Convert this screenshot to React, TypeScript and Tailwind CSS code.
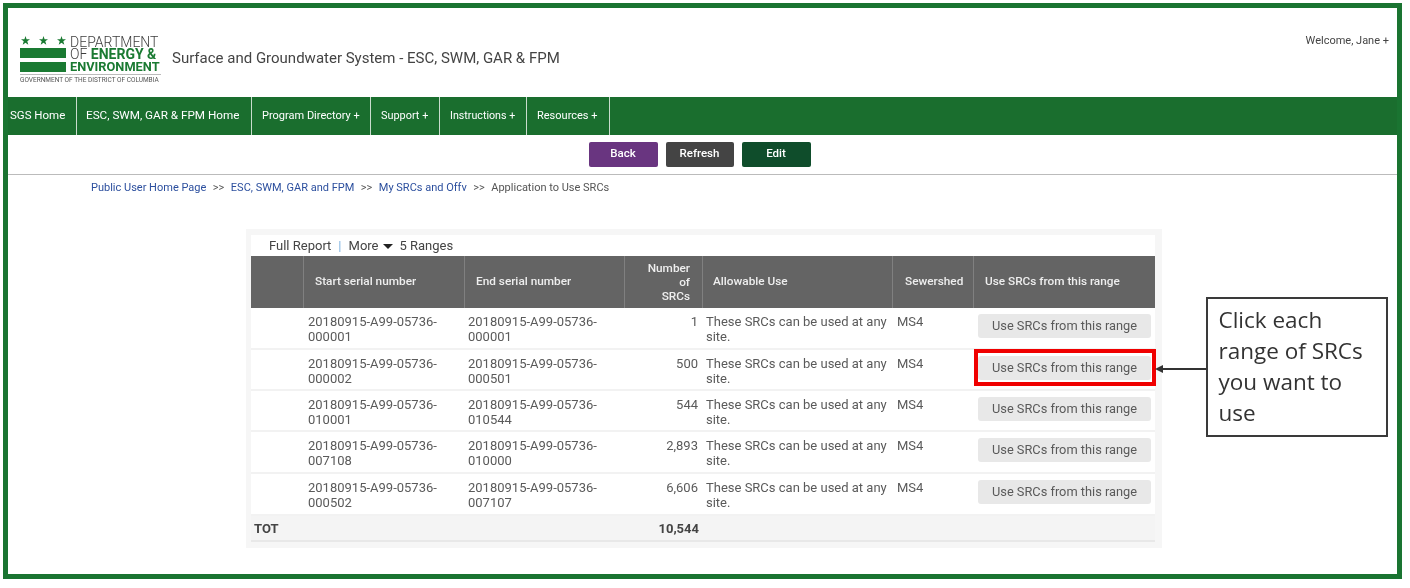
import React from "react";

const nav = [
  { t: "SGS Home", w: "w-[69px]", pl: "pl-[2px]", s: "text-[11.5px]" },
  { t: "ESC, SWM, GAR & FPM Home", w: "w-[175px]", pl: "pl-[9px]", s: "text-[11.7px]" },
  { t: "Program Directory +", w: "w-[119px]", pl: "pl-[10px]", s: "text-[11px]" },
  { t: "Support +", w: "w-[69px]", pl: "pl-[10px]", s: "text-[10.9px]" },
  { t: "Instructions +", w: "w-[87px]", pl: "pl-[10px]", s: "text-[10.7px]" },
  { t: "Resources +", w: "w-[83px]", pl: "pl-[10px]", s: "text-[11px]" },
];

const rows = [
  ["000001", "000001", "1", "h-[42px]"],
  ["000002", "000501", "500", "h-[41px]"],
  ["010001", "010544", "544", "h-[41px]"],
  ["007108", "010000", "2,893", "h-[42px]"],
  ["000502", "007107", "6,606", "h-[42px]"],
];

const cols = "grid grid-cols-[53px_161px_160px_78px_190px_81px_181px]";

function Star() {
  return (
    <svg width="9" height="9" viewBox="0 0 10 10" className="block">
      <path d="M5 0l1.2 3.6H10L7 5.9l1.1 3.7L5 7.4 1.9 9.6 3 5.9 0 3.6h3.8z" fill="#1a7a32" />
    </svg>
  );
}

function Logo() {
  return (
    <div className="w-[141px]">
      <div className="flex">
        <div className="w-[50px] shrink-0">
          <div className="flex h-[12px] justify-between pr-[4px] pl-[1px]">
            <Star />
            <Star />
            <Star />
          </div>
          <div className="h-[10px] w-[46px] bg-[#1a7a32]" />
          <div className="h-[4px]" />
          <div className="h-[10px] w-[46px] bg-[#1a7a32]" />
        </div>
        <div className="text-[#3d3d3d] whitespace-nowrap">
          <div className="h-[12px] text-[14px] font-light leading-[12px]">DEPARTMENT</div>
          <div className="h-[13px] text-[14px] font-light leading-[13px]">
            OF <span className="font-bold text-[#1a7a32]">ENERGY &amp;</span>
          </div>
          <div className="h-[12px] text-[12.8px] font-bold leading-[12px] text-[#1a7a32]">ENVIRONMENT</div>
        </div>
      </div>
      <div className="mt-[1px] border-t border-[#bbbbbb] pt-[2px] text-[6.5px] leading-[7px] text-[#555555] whitespace-nowrap">
        GOVERNMENT OF THE DISTRICT OF COLUMBIA
      </div>
    </div>
  );
}

export default function App() {
  return (
    <div className="relative h-[588px] w-[1410px] overflow-hidden bg-white pt-[3px] pl-[3px] font-['Roboto',sans-serif] blur-[0.35px]">
      <div className="h-[576px] w-[1399px] border-[5px] border-[#1a7431] bg-white">
        {/* header */}
        <div className="flex h-[89px] items-start">
          <div className="flex items-center pl-[12px] pt-[28px]">
            <Logo />
            <div className="ml-[11px] mb-[4px] text-[15px] text-[#444444] whitespace-nowrap">
              Surface and Groundwater System - ESC, SWM, GAR &amp; FPM
            </div>
          </div>
          <div className="ml-auto pt-[25px] pr-[8px] text-[11px] text-[#444444]">Welcome, Jane +</div>
        </div>
        {/* nav */}
        <div className="flex h-[38px] bg-[#1a6e2e]">
          {nav.map((n) => (
            <div
              key={n.t}
              className={`${n.w} ${n.pl} ${n.s} flex items-center border-r border-[#c9dccd] text-white whitespace-nowrap`}
            >
              {n.t}
            </div>
          ))}
        </div>
        {/* toolbar */}
        <div className="flex h-[40px] items-center justify-center gap-[8px] border-b border-[#bbbbbb] pr-[6px] pb-[1px]">
          <div className="flex h-[25px] w-[69px] items-center justify-center rounded-[2px] bg-[#693580] text-[11.5px] font-medium text-white">Back</div>
          <div className="flex h-[25px] w-[68px] items-center justify-center rounded-[2px] bg-[#444444] text-[11.5px] font-medium text-white">Refresh</div>
          <div className="flex h-[25px] w-[69px] items-center justify-center rounded-[2px] bg-[#0f4d2b] text-[11.5px] font-medium text-white">Edit</div>
        </div>
        {/* breadcrumb */}
        <div className="flex h-[24px] items-center pl-[83px] pt-[2px] text-[11px] text-[#555555] whitespace-nowrap">
          <span className="text-[#2c4f9e]">Public User Home Page</span>
          <span className="mx-[6.5px]">&gt;&gt;</span>
          <span className="text-[#2c4f9e]">ESC, SWM, GAR and FPM</span>
          <span className="mx-[6.5px]">&gt;&gt;</span>
          <span className="text-[#2c4f9e]">My SRCs and Offv</span>
          <span className="mx-[6.5px]">&gt;&gt;</span>
          <span>Application to Use SRCs</span>
        </div>
        {/* report card */}
        <div className="ml-[238px] mt-[30px] h-[319px] w-[916px] bg-[#f6f6f6] pt-[6px] pl-[5px]">
          <div className="w-[904px] bg-white">
            <div className="flex h-[21px] items-center pl-[18px] pt-[1px] text-[13px] text-[#444444]">
              <span>Full Report</span>
              <span className="ml-[7px] text-[#7fb2e0]">|</span>
              <span className="ml-[7px] flex items-center gap-[4px]">
                More
                <span className="h-0 w-0 border-x-[5px] border-t-[5px] border-x-transparent border-t-[#222222]" />
              </span>
              <span className="ml-[7px]">5 Ranges</span>
            </div>
            <div className={`${cols} h-[52px] bg-[#646464] text-[11.8px] font-medium text-[#eeeeee]`}>
              <div className="border-r border-[#808080]" />
              <div className="flex items-center border-r border-[#808080] pl-[11px]">Start serial number</div>
              <div className="flex items-center border-r border-[#808080] pl-[11px]">End serial number</div>
              <div className="flex items-center justify-end border-r border-[#808080] pr-[12px] text-right leading-[14px]">
                Number<br />of<br />SRCs
              </div>
              <div className="flex items-center border-r border-[#808080] pl-[10px]">Allowable Use</div>
              <div className="flex items-center border-r border-[#808080] pl-[12px]">Sewershed</div>
              <div className="flex items-center pl-[11px]">Use SRCs from this range</div>
            </div>
            {rows.map((r) => (
              <div key={r[0]} className={`${cols} ${r[3]} border-b-2 border-[#f2f2f2] text-[13px] leading-[15px] text-[#5a5a5a]`}>
                <div />
                <div className="pl-[4px] pt-[5.5px]">
                  20180915-A99-05736-<br />{r[0]}
                </div>
                <div className="pl-[3px] pt-[5.5px]">
                  20180915-A99-05736-<br />{r[1]}
                </div>
                <div className="pr-[5px] pt-[5.5px] text-right">{r[2]}</div>
                <div className="pl-[3px] pt-[5.5px] whitespace-nowrap">
                  These SRCs can be used at any<br />site.
                </div>
                <div className="pl-[4px] pt-[5.5px]">MS4</div>
                <div className="pl-[4px] pt-[6px]">
                  <div className="flex h-[24px] w-[173px] items-center justify-center rounded-[3px] bg-[#e8e8e8] pb-[1px] text-[12.8px] leading-[14px] text-[#5a5a5a]">
                    Use SRCs from this range
                  </div>
                </div>
              </div>
            ))}
            <div className={`${cols} h-[26px] items-center border-b-2 border-[#e8e8e8] bg-[#f4f4f4] pt-[1px] text-[13px] font-bold text-[#444444]`}>
              <div className="pl-[3px]">TOT</div>
              <div />
              <div />
              <div className="pr-[4px] text-right">10,544</div>
            </div>
          </div>
        </div>
      </div>

      {/* annotation overlays */}
      <div className="absolute left-[974px] top-[349px] h-[37px] w-[182px] border-[4px] border-[#f00000]" />
      <svg className="absolute left-[1155px] top-[363px]" width="53" height="12" viewBox="0 0 53 12">
        <path d="M0 6l8-4v8z" fill="#333333" />
        <path d="M6 6h46" stroke="#333333" strokeWidth="2" />
      </svg>
      <div className="absolute left-[1206px] top-[297px] h-[140px] w-[182px] border-[2.5px] border-[#3a3a3a] bg-white pl-[10.5px] pt-[4.5px] font-['Open_Sans',sans-serif] text-[22.5px] leading-[31.3px] text-[#333333]">
        Click each<br />range of SRCs<br />you want to<br />use
      </div>
    </div>
  );
}
